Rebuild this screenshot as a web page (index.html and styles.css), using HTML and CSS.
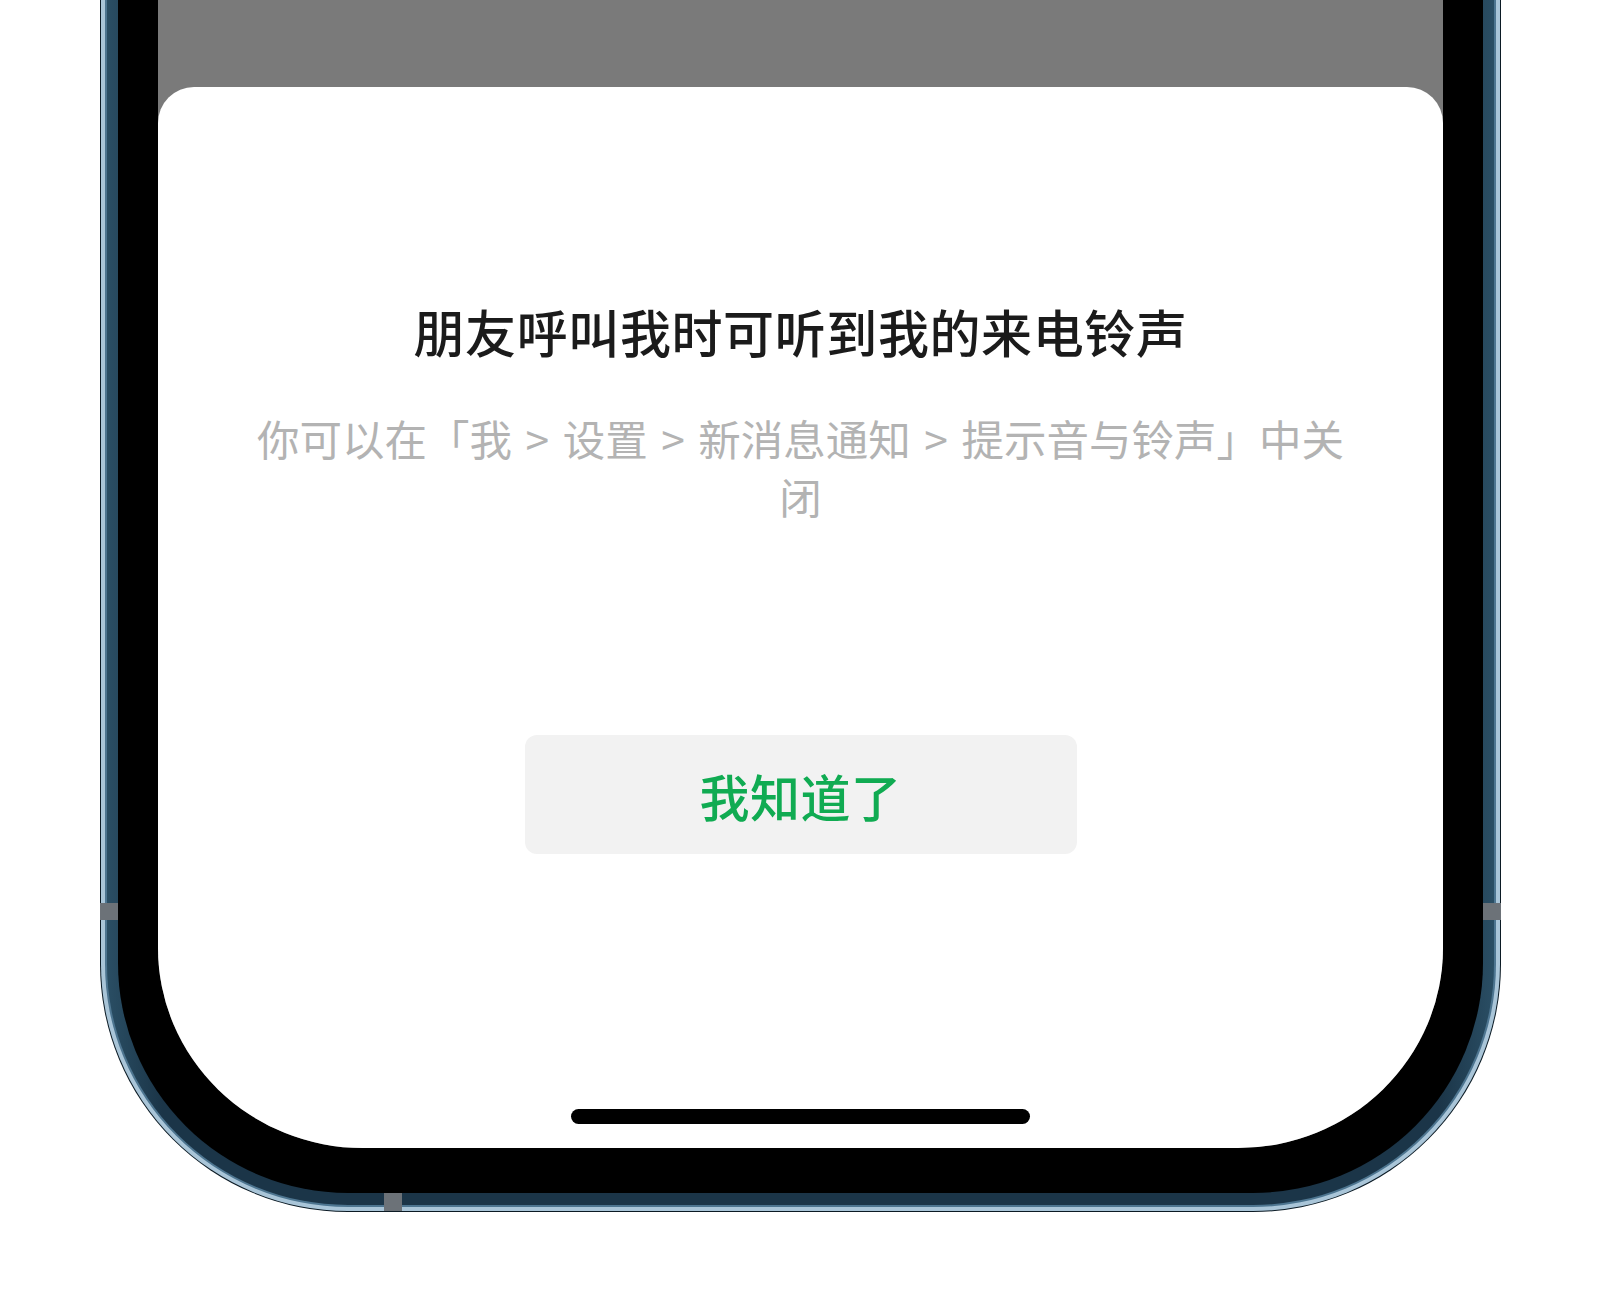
FILE: index.html
```html
<!DOCTYPE html>
<html lang="zh-CN">
<head>
<meta charset="utf-8">
<title>来电铃声</title>
<link rel="stylesheet" href="styles.css">
</head>
<body>
<div class="phone">
  <div class="edge">
    <div class="light">
      <div class="mid">
        <div class="band">
          <div class="bezel">
            <div class="screen">
              <div class="backdrop"></div>
              <div class="sheet">
                <h1 class="title">朋友呼叫我时可听到我的来电铃声</h1>
                <p class="desc">你可以在「我 &gt; 设置 &gt; 新消息通知 &gt; 提示音与铃声」中关闭</p>
                <button class="ok">我知道了</button>
                <div class="spacer"></div>
                <div class="home"></div>
              </div>
            </div>
          </div>
        </div>
      </div>
    </div>
  </div>
  <span class="key key-left"></span>
  <span class="key key-right"></span>
  <span class="key key-bottom"></span>
</div>
</body>
</html>
```

FILE: styles.css
```css
html, body {
  margin: 0;
  padding: 0;
  background: #ffffff;
}

body {
  width: 1600px;
  height: 1300px;
  overflow: hidden;
  font-family: "Noto Sans CJK SC", "Noto Sans", sans-serif;
}

.phone {
  position: relative;
  width: 1401px;
  margin-left: 100px;
}

.edge {
  background: #0b1a24;
  padding: 0 1px 1px 1px;
  border-radius: 0 0 248px 248px;
}

.light {
  background: #a9c5d8;
  padding: 0 4px 4px 4px;
  border-radius: 0 0 247px 247px;
}

.mid {
  background: #4d7590;
  padding: 0 2px 2px 2px;
  border-radius: 0 0 243px 243px;
}

.band {
  background: linear-gradient(90deg, #2a4e64 0%, #1b3548 4%, #1b3548 96%, #2a4e64 100%);
  padding: 0 11px 12px 11px;
  border-radius: 0 0 241px 241px;
}

.bezel {
  background: #000000;
  padding: 0 40px 45px 40px;
  border-radius: 0 0 230px 230px;
}

.screen {
  height: 1148px;
  background: #7a7a7a;
  border-radius: 0 0 205px 205px / 0 0 200px 200px;
  overflow: hidden;
  display: flex;
  flex-direction: column;
}

.backdrop {
  height: 87px;
  flex: none;
}

.sheet {
  flex: 1;
  background: #ffffff;
  border-radius: 36px 36px 0 0;
  display: flex;
  flex-direction: column;
  align-items: center;
}

.title {
  margin: 208px 0 0 0;
  font-size: 51px;
  line-height: 72px;
  font-weight: 500;
  letter-spacing: 0.6px;
  color: #1b1b1b;
  text-align: center;
}

.desc {
  margin: 42px 0 0 0;
  width: 1110px;
  font-size: 42.5px;
  line-height: 58px;
  word-spacing: 4px;
  color: #b3b3b3;
  text-align: center;
}

.ok {
  margin-top: 210px;
  width: 552px;
  height: 119px;
  border: none;
  border-radius: 12px;
  background: #f2f2f2;
  color: #10ab52;
  font-family: "Noto Sans CJK SC", "Noto Sans", sans-serif;
  font-size: 50px;
  font-weight: 500;
  letter-spacing: 0.5px;
  padding: 0;
}

.spacer {
  flex: 1;
}

.home {
  width: 459px;
  height: 15px;
  border-radius: 8px;
  background: #000000;
  margin-bottom: 24px;
}

.key {
  position: absolute;
  background: #6c7278;
}

.key-left {
  left: 0;
  top: 903px;
  width: 18px;
  height: 17px;
}

.key-right {
  right: 0;
  top: 903px;
  width: 18px;
  height: 17px;
}

.key-bottom {
  left: 284px;
  bottom: 1px;
  width: 18px;
  height: 18px;
}
```
